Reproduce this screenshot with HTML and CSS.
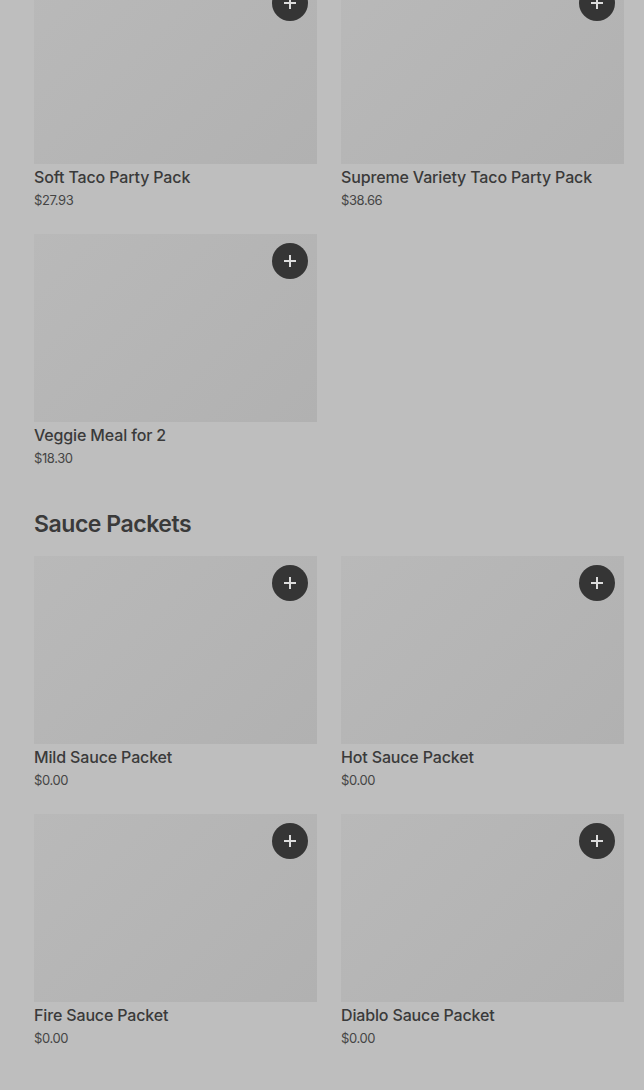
FILE: index.html
```html
<!DOCTYPE html>
<html lang="en">

<head>
    <meta charset="UTF-8" />
    <meta name="viewport" content="width=device-width, initial-scale=1.0" />
    <title>Menu</title>
    <link rel="stylesheet" href="styles.css">
</head>

<body>
    <div class="page-cont">
        <!-- PARTY PACKS (scrolled) -->
        <div class="item-grid">
            <div class="item-card">
                <div class="item-img"><div class="add-btn"></div></div>
                <div class="item-title">Soft Taco Party Pack</div>
                <div class="item-price">$27.93</div>
            </div>
            <div class="item-card">
                <div class="item-img"><div class="add-btn"></div></div>
                <div class="item-title">Supreme Variety Taco Party Pack</div>
                <div class="item-price">$38.66</div>
            </div>
            <div class="item-card">
                <div class="item-img"><div class="add-btn"></div></div>
                <div class="item-title">Veggie Meal for 2</div>
                <div class="item-price">$18.30</div>
            </div>
        </div>

        <!-- SAUCE PACKETS -->
        <h2 class="section-title">Sauce Packets</h2>
        <div class="item-grid">
            <div class="item-card">
                <div class="item-img"><div class="add-btn"></div></div>
                <div class="item-title">Mild Sauce Packet</div>
                <div class="item-price">$0.00</div>
            </div>
            <div class="item-card">
                <div class="item-img"><div class="add-btn"></div></div>
                <div class="item-title">Hot Sauce Packet</div>
                <div class="item-price">$0.00</div>
            </div>
            <div class="item-card">
                <div class="item-img"><div class="add-btn"></div></div>
                <div class="item-title">Fire Sauce Packet</div>
                <div class="item-price">$0.00</div>
            </div>
            <div class="item-card">
                <div class="item-img"><div class="add-btn"></div></div>
                <div class="item-title">Diablo Sauce Packet</div>
                <div class="item-price">$0.00</div>
            </div>
        </div>
    </div>
</body>

</html>
```

FILE: styles.css
```css
* {
box-sizing: border-box;
}

body {
margin: 0;
padding: 0;
background-color: #bebebe;
font-family: Inter, "Noto Sans", sans-serif;
color: #3a3a3a;
overflow: hidden;
}

.page-cont {
margin-top: -24px;
padding-left: 34px;
}

.item-grid {
display: grid;
grid-template-columns: 283px 283px;
column-gap: 24px;
row-gap: 24px;
}

.item-img {
height: 188px;
background: linear-gradient(135deg, #b9b9b9, #b1b1b1);
display: flex;
justify-content: flex-end;
padding: 9px;
}

.add-btn {
width: 36px;
height: 36px;
border-radius: 50%;
background-color: #353535;
position: relative;
}

.add-btn::before,
.add-btn::after {
content: "";
position: absolute;
background-color: #dcdcdc;
left: 50%;
top: 50%;
transform: translate(-50%, -50%);
}

.add-btn::before {
width: 12px;
height: 2px;
}

.add-btn::after {
width: 2px;
height: 12px;
}

.item-title {
margin-top: 1px;
font-size: 16px;
line-height: 24px;
font-weight: 500;
letter-spacing: -0.15px;
}

.item-price {
margin-top: 1px;
font-size: 13px;
line-height: 20px;
letter-spacing: -0.4px;
color: #454545;
}

.section-title {
margin: 32px 0 8px 0;
font-size: 23px;
line-height: 48px;
font-weight: 600;
letter-spacing: -0.45px;
}
```
